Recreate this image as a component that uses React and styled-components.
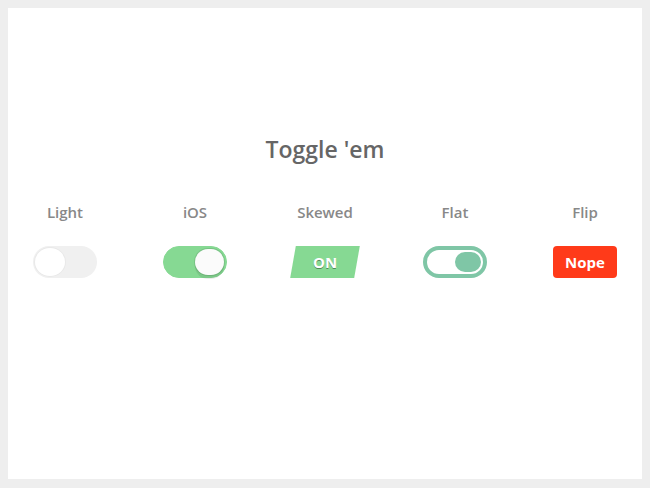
import React, { useState } from "react";
import styled, { createGlobalStyle } from "styled-components";

const GlobalStyle = createGlobalStyle`
  html, body {
    background: #eeeeee;
  }
  body {
    margin: 8px 8px 9px;
    font-family: "Open Sans", "Liberation Sans", sans-serif;
  }
`;

const Panel = styled.div`
  height: 471px;
  background: #fff;
  display: flex;
  flex-direction: column;
  align-items: center;
  padding-top: 126px;
  box-sizing: border-box;
`;

const Title = styled.h1`
  margin: 0;
  font-size: 23px;
  line-height: 30px;
  font-weight: 600;
  color: #666;
`;

const ToggleList = styled.ul`
  list-style: none;
  margin: 38px 0 0;
  padding: 0;
  display: flex;
  justify-content: center;
  width: 652px;
`;

const Item = styled.li`
  width: 130px;
  display: flex;
  flex-direction: column;
  align-items: center;
  gap: 24px;
`;

const Label = styled.h4`
  margin: 0;
  font-size: 15px;
  line-height: 20px;
  font-weight: 600;
  color: #888;
`;

const Track = styled.button`
  box-sizing: border-box;
  width: 64px;
  height: 32px;
  padding: 2px;
  border: none;
  display: flex;
  justify-content: ${(p) => (p.$on ? "flex-end" : "flex-start")};
  cursor: pointer;
  outline: 0;
  font-family: inherit;
`;

const LightTrack = styled(Track)`
  background: ${(p) => (p.$on ? "#9fd6ae" : "#f0f0f0")};
  border-radius: 32px;
`;

const LightKnob = styled.span`
  width: 50%;
  height: 100%;
  border-radius: 50%;
  background: #fff;
  box-shadow: 0 0 0 1px rgba(0, 0, 0, 0.03);
`;

const IosTrack = styled(Track)`
  background: ${(p) => (p.$on ? "#86d993" : "#fbfbfb")};
  border: 1px solid ${(p) => (p.$on ? "#86d993" : "#e8eae9")};
  border-radius: 32px;
`;

const IosKnob = styled.span`
  width: 50%;
  height: 100%;
  border-radius: 32px;
  background: #fbfbfb;
  box-shadow: 0 0 0 1px rgba(0, 0, 0, 0.1), 0 4px 0 rgba(0, 0, 0, 0.08);
`;

const SkewTrack = styled(Track)`
  padding: 0;
  justify-content: center;
  align-items: center;
  transform: skew(-10deg);
  background: ${(p) => (p.$on ? "#86d993" : "#888")};
  color: #fff;
  font-size: 15px;
  font-weight: 700;
  text-shadow: 0 1px 0 rgba(0, 0, 0, 0.4);
`;

const SkewText = styled.span`
  transform: skew(10deg);
`;

const FlatTrack = styled(Track)`
  background: #fff;
  border: 4px solid ${(p) => (p.$on ? "#7fc6a6" : "#f2f2f2")};
  border-radius: 32px;
`;

const FlatKnob = styled.span`
  width: 50%;
  height: 100%;
  border-radius: 32px;
  background: ${(p) => (p.$on ? "#7fc6a6" : "#f2f2f2")};
`;

const FlipTrack = styled(Track)`
  padding: 0;
  justify-content: center;
  align-items: center;
  border-radius: 4px;
  background: ${(p) => (p.$on ? "#7fc6a6" : "#ff3a19")};
  color: #fff;
  font-size: 15px;
  font-weight: 700;
`;

export default function App() {
  const [state, setState] = useState({
    light: false,
    ios: true,
    skewed: true,
    flat: true,
    flip: false,
  });

  const flip = (key) => () => setState({ ...state, [key]: !state[key] });

  return (
    <>
      <GlobalStyle />
      <Panel>
        <Title>Toggle 'em</Title>
        <ToggleList>
          <Item>
            <Label>Light</Label>
            <LightTrack $on={state.light} onClick={flip("light")}>
              <LightKnob />
            </LightTrack>
          </Item>
          <Item>
            <Label>iOS</Label>
            <IosTrack $on={state.ios} onClick={flip("ios")}>
              <IosKnob />
            </IosTrack>
          </Item>
          <Item>
            <Label>Skewed</Label>
            <SkewTrack $on={state.skewed} onClick={flip("skewed")}>
              <SkewText>{state.skewed ? "ON" : "OFF"}</SkewText>
            </SkewTrack>
          </Item>
          <Item>
            <Label>Flat</Label>
            <FlatTrack $on={state.flat} onClick={flip("flat")}>
              <FlatKnob $on={state.flat} />
            </FlatTrack>
          </Item>
          <Item>
            <Label>Flip</Label>
            <FlipTrack $on={state.flip} onClick={flip("flip")}>
              {state.flip ? "Yeah!" : "Nope"}
            </FlipTrack>
          </Item>
        </ToggleList>
      </Panel>
    </>
  );
}
